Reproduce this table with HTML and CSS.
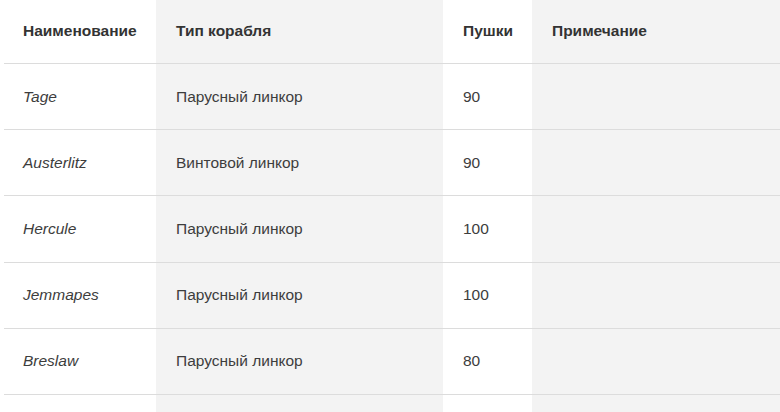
FILE: index.html
```html
<!DOCTYPE html>
<html lang="ru">
<head>
<meta charset="utf-8">
<link rel="stylesheet" href="styles.css">
</head>
<body>
<table class="ships">
  <colgroup>
    <col class="c1">
    <col class="c2 alt">
    <col class="c3">
    <col class="c4 alt">
  </colgroup>
  <thead>
    <tr><th>Наименование</th><th>Тип корабля</th><th>Пушки</th><th>Примечание</th></tr>
  </thead>
  <tbody>
    <tr><td class="name">Tage</td><td>Парусный линкор</td><td>90</td><td></td></tr>
    <tr><td class="name">Austerlitz</td><td>Винтовой линкор</td><td>90</td><td></td></tr>
    <tr><td class="name">Hercule</td><td>Парусный линкор</td><td>100</td><td></td></tr>
    <tr><td class="name">Jemmapes</td><td>Парусный линкор</td><td>100</td><td></td></tr>
    <tr><td class="name">Breslaw</td><td>Парусный линкор</td><td>80</td><td></td></tr>
  </tbody>
</table>
<div class="tail"></div>
</body>
</html>
```
FILE: styles.css
```css
html, body {
  margin: 0;
  padding: 0;
  background: #fff;
}
body {
  font-family: "Liberation Sans", Arial, sans-serif;
  font-size: 15.5px;
  color: #333;
  height: 412px;
  overflow: hidden;
}
.ships {
  margin-left: 4px;
  width: 776px;
  border-collapse: collapse;
  table-layout: fixed;
}
.c1 { width: 152px; }
.c2 { width: 287px; }
.c3 { width: 89px; }
.c4 { width: 248px; }
.alt { background: #f3f3f3; }
.ships th,
.ships td {
  padding: 0 20px;
  border-bottom: 1px solid #dcdcdc;
  vertical-align: middle;
}
.ships th:first-child,
.ships td:first-child {
  padding-left: 19px;
}
.ships th {
  text-align: left;
  font-weight: bold;
  color: #333;
  height: 61px;
  padding-bottom: 2px;
}
.ships td {
  height: 65.2px;
  line-height: 20px;
  color: #3d3d3d;
}
.ships td.name {
  font-style: italic;
}
.tail {
  margin-left: 4px;
  width: 776px;
  height: 40px;
  background: linear-gradient(to right, #fff 0 152px, #f3f3f3 152px 439px, #fff 439px 528px, #f3f3f3 528px);
}
```
